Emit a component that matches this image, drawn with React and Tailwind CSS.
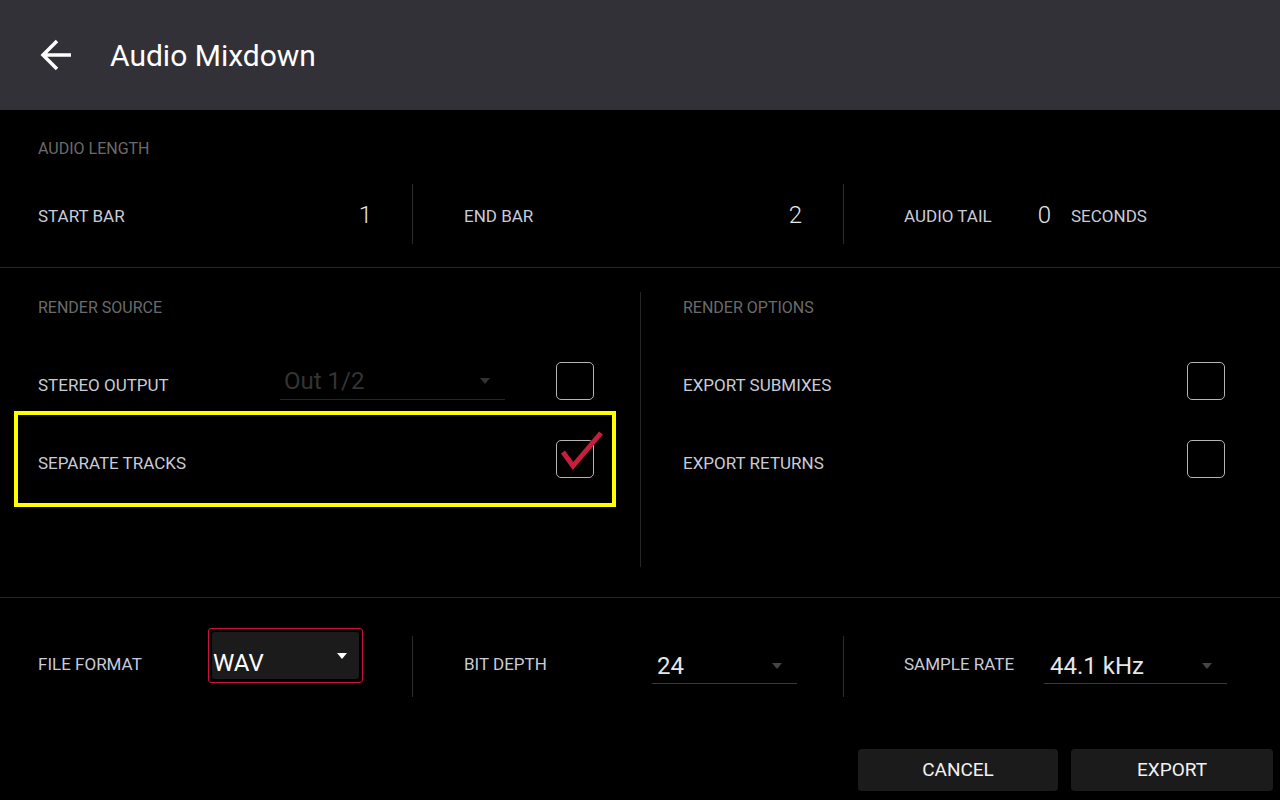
import React from "react";

const label = "text-[17px] leading-5 text-[#c8ccd8] whitespace-nowrap";
const heading = "text-[16px] leading-5 text-[#6b6b6b] whitespace-nowrap";

// ==============================
// small pieces
// ==============================
const Checkbox = ({ checked }) => (
  <div className="relative w-[38px] h-[38px] shrink-0 rounded-[5px] border-[1.5px] border-[#b5b5b5]">
    {checked && (
      <svg className="absolute left-[-1px] top-[-13px]" width="48" height="52" viewBox="0 0 48 52">
        <path d="M7 24 L17 38 L45 5" fill="none" stroke="#c81e3c" strokeWidth="5" />
      </svg>
    )}
  </div>
);

const Caret = ({ color }) => (
  <svg width="12" height="8" viewBox="0 0 12 8">
    <path d="M1 1 H11 L6 7 Z" fill={color} />
  </svg>
);

const ArrowBack = () => (
  <svg width="34" height="34" viewBox="0 0 34 34">
    <path d="M32 17 H4 M18 3 L4 17 L18 31" fill="none" stroke="#fff" strokeWidth="3.5" />
  </svg>
);

export default function App() {
  return (
    <div className="w-[1280px] h-[800px] overflow-hidden bg-black font-['Roboto','Liberation_Sans',sans-serif]">
      {/* HEADER */}
      <div className="h-[110px] bg-[#323137] flex items-center pl-[39px]">
        <ArrowBack />
        <span className="ml-[37px] mt-[2px] text-[30px] text-white leading-none">Audio Mixdown</span>
      </div>

      {/* AUDIO LENGTH */}
      <div className="h-[158px] border-b border-[#262626] pt-[29px]">
        <div className={`${heading} pl-[38px]`}>AUDIO LENGTH</div>
        <div className="mt-[25px] flex h-[60px] items-center">
          <div className="w-[413px] h-full pl-[38px] pr-[40px] border-r border-[#2b2b2b] flex items-center justify-between">
            <span className={`${label} mt-[4px]`}>START BAR</span>
            <span className="mt-[2px] text-[24px] font-light text-[#e6e6e6]">1</span>
          </div>
          <div className="w-[431px] h-full pl-[51px] pr-[41px] border-r border-[#2b2b2b] flex items-center justify-between">
            <span className={`${label} mt-[4px]`}>END BAR</span>
            <span className="mt-[2px] text-[24px] font-light text-[#e6e6e6]">2</span>
          </div>
          <div className="h-full pl-[60px] flex items-center">
            <span className={`${label} mt-[4px]`}>AUDIO TAIL</span>
            <span className="ml-[46px] mt-[2px] text-[24px] font-light text-[#e6e6e6]">0</span>
            <span className={`${label} ml-[20px] mt-[4px]`}>SECONDS</span>
          </div>
        </div>
      </div>

      {/* RENDER */}
      <div className="h-[330px] border-b border-[#262626] pt-[24px] flex">
        <div className="w-[640px] h-[275px] pl-[14px] pr-[24px]">
          <div className={`${heading} pl-[24px] pt-[6px]`}>RENDER SOURCE</div>
          <div className="mt-[43px] h-[40px] pl-[24px] pr-[22px] flex items-center">
            <span className={`${label} w-[242px] mt-[8px]`}>STEREO OUTPUT</span>
            <div className="w-[225px] h-[38px] border-b border-[#262626] flex items-center justify-between pl-[4px] pr-[14px]">
              <span className="text-[24px] text-[#343434]">Out 1/2</span>
              <Caret color="#333" />
            </div>
            <div className="ml-auto">
              <Checkbox />
            </div>
          </div>
          <div className="mt-[10px] h-[96px] border-[4px] border-[#ffff00] pl-[20px] pr-[18px] flex items-center justify-between">
            <span className={`${label} mt-[8px]`}>SEPARATE TRACKS</span>
            <Checkbox checked />
          </div>
        </div>
        <div className="flex-1 h-[275px] border-l border-[#262626] pl-[42px] pr-[55px]">
          <div className={`${heading} pt-[6px]`}>RENDER OPTIONS</div>
          <div className="mt-[43px] h-[40px] flex items-center justify-between">
            <span className={`${label} mt-[8px]`}>EXPORT SUBMIXES</span>
            <Checkbox />
          </div>
          <div className="mt-[38px] h-[40px] flex items-center justify-between">
            <span className={`${label} mt-[8px]`}>EXPORT RETURNS</span>
            <Checkbox />
          </div>
        </div>
      </div>

      {/* FORMAT */}
      <div className="pt-[38px]">
        <div className="flex h-[61px] items-center">
          <div className="w-[413px] h-full pl-[38px] border-r border-[#2b2b2b] flex items-center">
            <span className={`${label} w-[170px] mb-[5px]`}>FILE FORMAT</span>
            <div className="mb-[22px] w-[155px] h-[55px] rounded-[3px] border border-[#c8143c] p-[3px]">
              <div className="h-full rounded-[3px] bg-[#1b1b1b] flex items-center justify-between pl-[1px] pr-[11px]">
                <span className="mt-[14px] text-[24px] text-white">WAV</span>
                <Caret color="#fff" />
              </div>
            </div>
          </div>
          <div className="w-[431px] h-full pl-[51px] border-r border-[#2b2b2b] flex items-center">
            <span className={`${label} w-[188px] mb-[5px]`}>BIT DEPTH</span>
            <div className="w-[145px] h-[34px] border-b border-[#3a3a3a] flex items-center justify-between pl-[5px] pr-[14px]">
              <span className="text-[24px] text-[#e6e6e6]">24</span>
              <Caret color="#444" />
            </div>
          </div>
          <div className="h-full pl-[60px] flex items-center">
            <span className={`${label} w-[140px] mb-[5px]`}>SAMPLE RATE</span>
            <div className="w-[183px] h-[34px] border-b border-[#3a3a3a] flex items-center justify-between pl-[6px] pr-[14px]">
              <span className="text-[24px] text-[#e6e6e6]">44.1 kHz</span>
              <Caret color="#444" />
            </div>
          </div>
        </div>

        <div className="mt-[52px] flex justify-end gap-[13px] pr-[7px]">
          <button className="w-[200px] h-[42px] rounded-[4px] bg-[#1b1b1b] text-[19px] text-[#f2f2f2]">CANCEL</button>
          <button className="w-[202px] h-[42px] rounded-[4px] bg-[#1b1b1b] text-[19px] text-[#f2f2f2]">EXPORT</button>
        </div>
      </div>
    </div>
  );
}
